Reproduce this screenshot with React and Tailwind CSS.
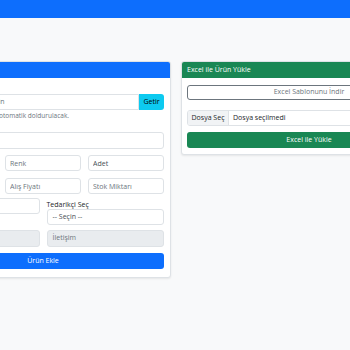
export default function App() {
  return (
    <div className="min-h-[350px] overflow-hidden bg-[#f8f9fa] font-['Open_Sans',sans-serif] text-[7px] text-[#212529]">
      <nav className="h-[18px] bg-[#0d6efd]" />

      <div className="mt-[43px] ml-[-85px] flex items-start gap-[10px]">
        {/* left card: product form */}
        <div className="w-[256px] shrink-0 rounded-[3px] border border-[#dee2e6] bg-white shadow-[0_1px_2px_rgba(0,0,0,0.08)]">
          <div className="h-[16px] rounded-t-[2px] bg-[#0d6efd]" />
          <div className="px-[6px] pt-[16px] pb-[8px]">
            <div className="flex h-[16px]">
              <input
                className="min-w-0 flex-1 rounded-l-[3px] border border-[#dee2e6] px-[3px] text-[7px] outline-none placeholder:text-[#6c757d]"
                placeholder="Barkod numarasını girin"
              />
              <button className="w-[25px] rounded-r-[3px] bg-[#0dcaf0] text-[7px] text-[#000]">Getir</button>
            </div>
            <div className="mt-[2px] flex whitespace-nowrap text-[6.5px] leading-[8px] text-[#6c757d]">
              <span className="w-[77px] shrink-0 overflow-hidden">Ürün bilgileri barkoddan</span>
              <span>otomatik doldurulacak.</span>
            </div>

            <input className="mt-[12px] block h-[17px] w-full rounded-[3px] border border-[#dee2e6] px-[3px] text-[7px] outline-none" />

            <div className="mt-[6px] grid grid-cols-3 gap-[7px]">
              <input className="h-[16px] min-w-0 rounded-[3px] border border-[#dee2e6] px-[4px] text-[7px] outline-none" />
              <input
                className="h-[16px] min-w-0 rounded-[3px] border border-[#dee2e6] px-[4px] text-[7px] outline-none placeholder:text-[#6c757d]"
                placeholder="Renk"
              />
              <input
                className="h-[16px] min-w-0 rounded-[3px] border border-[#dee2e6] px-[4px] text-[7px] outline-none placeholder:text-[#495057]"
                placeholder="Adet"
              />
            </div>

            <div className="mt-[7px] grid grid-cols-3 gap-[7px]">
              <input className="h-[16px] min-w-0 rounded-[3px] border border-[#dee2e6] px-[4px] text-[7px] outline-none" />
              <input
                className="h-[16px] min-w-0 rounded-[3px] border border-[#dee2e6] px-[4px] text-[7px] outline-none placeholder:text-[#6c757d]"
                placeholder="Alış Fiyatı"
              />
              <input
                className="h-[16px] min-w-0 rounded-[3px] border border-[#dee2e6] px-[4px] text-[7px] outline-none placeholder:text-[#6c757d]"
                placeholder="Stok Miktarı"
              />
            </div>

            <div className="mt-[4px] grid grid-cols-2 items-start gap-[7px]">
              <input className="h-[16px] min-w-0 rounded-[3px] border border-[#dee2e6] px-[4px] text-[7px] outline-none" />
              <div>
                <label className="mt-[3px] block leading-[8px]">Tedarikçi Seç</label>
                <div className="flex h-[16px] items-center rounded-[3px] border border-[#dee2e6] px-[5px] text-[#495057]">
                  -- Seçin --
                </div>
              </div>
            </div>

            <div className="mt-[5px] grid grid-cols-2 gap-[7px]">
              <div className="h-[17px] rounded-[3px] border border-[#dee2e6] bg-[#e9ecef]" />
              <div className="flex h-[17px] items-center rounded-[3px] border border-[#dee2e6] bg-[#e9ecef] px-[5px] text-[#6c757d]">
                İletişim
              </div>
            </div>

            <button className="mt-[6px] block h-[16px] w-full rounded-[3px] bg-[#0d6efd] text-[7px] text-white">
              Ürün Ekle
            </button>
          </div>
        </div>

        {/* right card: excel upload */}
        <div className="w-[256px] shrink-0 rounded-[3px] border border-[#dee2e6] bg-white shadow-[0_1px_2px_rgba(0,0,0,0.08)]">
          <div className="flex h-[16px] items-center rounded-t-[2px] bg-[#198754] px-[5px] text-white">
            Excel ile Ürün Yükle
          </div>
          <div className="px-[5px] pt-[7px] pb-[6px]">
            <button className="block h-[15px] w-full rounded-[3px] border border-[#6c757d] text-[7px] text-[#6c757d]">
              Excel Sablonunu İndir
            </button>
            <div className="mt-[10px] flex h-[16px] overflow-hidden rounded-[3px] border border-[#dee2e6]">
              <div className="flex w-[41px] items-center justify-center border-r border-[#dee2e6] bg-[#f1f3f5]">
                Dosya Seç
              </div>
              <div className="flex items-center px-[4px]">Dosya seçilmedi</div>
            </div>
            <button className="mt-[6px] block h-[16px] w-full rounded-[3px] bg-[#198754] text-[7px] text-white">
              Excel ile Yükle
            </button>
          </div>
        </div>
      </div>
    </div>
  )
}
